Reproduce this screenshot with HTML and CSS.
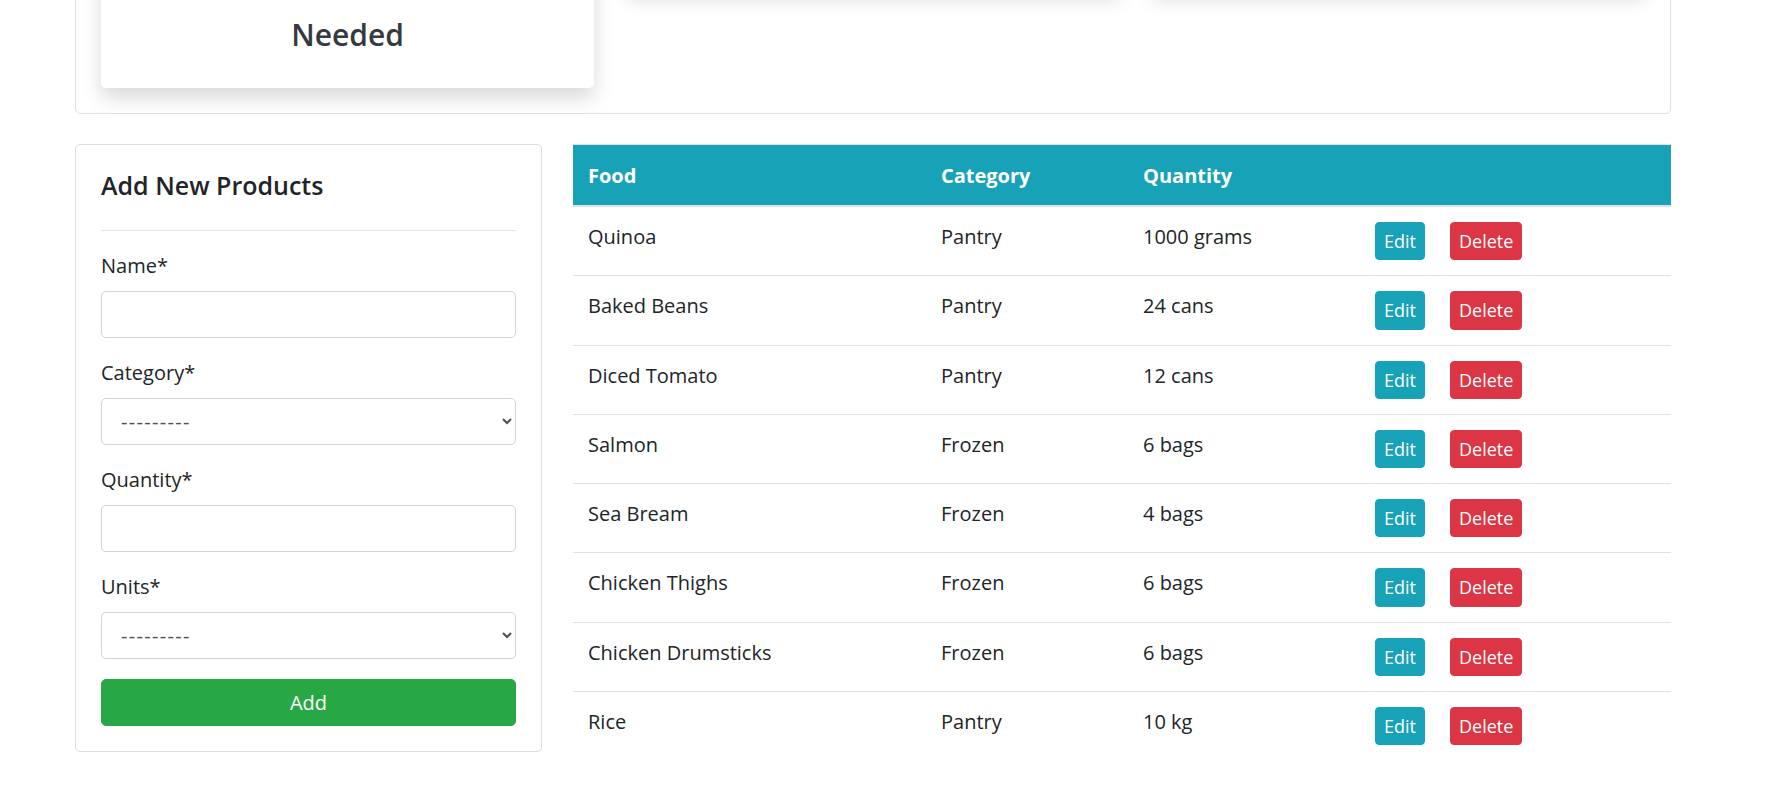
FILE: index.html
```html
<!DOCTYPE html>
<html lang="en">
<head>
<meta charset="utf-8">
<title>Pantry</title>
<link rel="stylesheet" href="styles.css">
</head>
<body>
<div class="page">
  <section class="summary">
    <div class="stat-card stat-card-main">
      <div class="stat-figure"></div>
      <h3 class="stat-label">Needed</h3>
    </div>
    <div class="stat-card">
      <div class="stat-figure-small"></div>
    </div>
    <div class="stat-card">
      <div class="stat-figure-small"></div>
    </div>
  </section>

  <section class="main">
    <div class="form-card">
      <h5 class="form-title">Add New Products</h5>
      <hr class="divider">
      <form class="product-form">
        <div class="form-group">
          <label class="form-label" for="name">Name*</label>
          <input class="form-control" id="name" type="text">
        </div>
        <div class="form-group">
          <label class="form-label" for="category">Category*</label>
          <select class="form-control form-select" id="category">
            <option>---------</option>
          </select>
        </div>
        <div class="form-group">
          <label class="form-label" for="quantity">Quantity*</label>
          <input class="form-control" id="quantity" type="text">
        </div>
        <div class="form-group">
          <label class="form-label" for="units">Units*</label>
          <select class="form-control form-select" id="units">
            <option>---------</option>
          </select>
        </div>
        <button type="button" class="btn-add">Add</button>
      </form>
    </div>

    <table class="food-table">
      <thead>
        <tr>
          <th class="col-food">Food</th>
          <th class="col-cat">Category</th>
          <th class="col-qty">Quantity</th>
          <th class="col-act"></th>
        </tr>
      </thead>
      <tbody>
        <tr><td>Quinoa</td><td>Pantry</td><td>1000 grams</td><td><a class="btn btn-edit">Edit</a><button class="btn btn-delete">Delete</button></td></tr>
        <tr><td>Baked Beans</td><td>Pantry</td><td>24 cans</td><td><a class="btn btn-edit">Edit</a><button class="btn btn-delete">Delete</button></td></tr>
        <tr><td>Diced Tomato</td><td>Pantry</td><td>12 cans</td><td><a class="btn btn-edit">Edit</a><button class="btn btn-delete">Delete</button></td></tr>
        <tr><td>Salmon</td><td>Frozen</td><td>6 bags</td><td><a class="btn btn-edit">Edit</a><button class="btn btn-delete">Delete</button></td></tr>
        <tr><td>Sea Bream</td><td>Frozen</td><td>4 bags</td><td><a class="btn btn-edit">Edit</a><button class="btn btn-delete">Delete</button></td></tr>
        <tr><td>Chicken Thighs</td><td>Frozen</td><td>6 bags</td><td><a class="btn btn-edit">Edit</a><button class="btn btn-delete">Delete</button></td></tr>
        <tr><td>Chicken Drumsticks</td><td>Frozen</td><td>6 bags</td><td><a class="btn btn-edit">Edit</a><button class="btn btn-delete">Delete</button></td></tr>
        <tr><td>Rice</td><td>Pantry</td><td>10 kg</td><td><a class="btn btn-edit">Edit</a><button class="btn btn-delete">Delete</button></td></tr>
      </tbody>
    </table>
  </section>
</div>
</body>
</html>
```

FILE: styles.css
```css
* { box-sizing: border-box; }

html, body {
  margin: 0;
  background: #fff;
}

body {
  font-family: "Open Sans", "Noto Sans", "Liberation Sans", sans-serif;
  font-size: 20px;
  line-height: 30px;
  color: #212529;
}

.page {
  width: 1596px;
  margin-left: 75px;
}

/* ---------- summary (scrolled partly out of view) ---------- */
.summary {
  margin-top: -140px;
  border: 1px solid rgba(0, 0, 0, 0.125);
  border-radius: 5px;
  padding: 25px;
  display: flex;
  align-items: flex-start;
  gap: 32.5px;
}

.stat-card {
  flex: 1 1 0;
  background: #fff;
  border-radius: 5px;
  box-shadow: 0 10px 20px rgba(0, 0, 0, 0.15);
  text-align: center;
  padding: 25px 25px 35px;
  color: #343a40;
}

.stat-figure {
  height: 96px;
  margin-bottom: 10px;
}

.stat-figure-small {
  height: 43px;
}

.stat-label {
  margin: 0;
  font-size: 30px;
  line-height: 36px;
  font-weight: 600;
}

/* ---------- main area ---------- */
.main {
  margin-top: 30px;
  display: flex;
  align-items: flex-start;
  gap: 31px;
}

.form-card {
  width: 467px;
  flex: none;
  border: 1px solid rgba(0, 0, 0, 0.125);
  border-radius: 5px;
  padding: 25px;
}

.form-title {
  margin: 0;
  font-size: 25px;
  line-height: 30px;
  font-weight: 600;
}

.divider {
  margin: 30px 0 20px;
  border: 0;
  border-top: 1px solid rgba(0, 0, 0, 0.1);
}

.form-group {
  margin-bottom: 20px;
}

.form-label {
  display: block;
  margin-bottom: 10px;
}

.form-control {
  display: block;
  width: 100%;
  height: 47px;
  padding: 7px 15px;
  font-family: inherit;
  font-size: 20px;
  line-height: 30px;
  color: #495057;
  background: #fff;
  border: 1px solid #ced4da;
  border-radius: 5px;
}

.form-select {
  padding-left: 15px;
  letter-spacing: 1.3px;
}

.btn-add {
  display: block;
  width: 100%;
  height: 47px;
  border: 1px solid #28a745;
  border-radius: 5px;
  background: #28a745;
  color: #fff;
  font-family: inherit;
  font-size: 20px;
  line-height: 30px;
}

/* ---------- table ---------- */
.food-table {
  width: 1098px;
  flex: none;
  border-collapse: collapse;
  table-layout: fixed;
}

.col-food { width: 353px; }
.col-cat { width: 202px; }
.col-qty { width: 232px; }
.col-act { width: 311px; }

.food-table th {
  background: #17a2b8;
  color: #fff;
  font-weight: 700;
  text-align: left;
  padding: 16px 15px 14px;
  line-height: 30px;
  border-top: 1px solid #dee2e6;
  border-bottom: 2px solid #dee2e6;
}

.food-table td {
  padding: 15px 15px;
  line-height: 30px;
  vertical-align: top;
  border-top: 1px solid #dee2e6;
  white-space: nowrap;
}

.food-table tbody tr:first-child td {
  border-top: 0;
}

.btn {
  display: inline-block;
  vertical-align: top;
  height: 38.25px;
  padding: 4px 8px;
  font-family: inherit;
  font-size: 18px;
  line-height: 28px;
  color: #fff;
  border-radius: 4px;
  border: 1px solid transparent;
  cursor: pointer;
}

.btn-edit {
  background: #17a2b8;
  border-color: #17a2b8;
}

.btn-delete {
  margin-left: 25px;
  background: #dc3545;
  border-color: #dc3545;
}
```
